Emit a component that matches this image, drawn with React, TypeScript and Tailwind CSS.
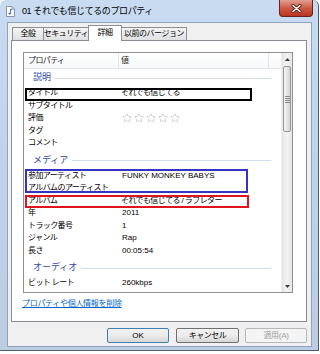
import React from "react";
import { Star } from "lucide-react";

type Item = { label: string; value?: React.ReactNode; latin?: boolean };
type Group = { name: string; items: Item[] };

const Stars = () => (
  <div className="flex items-center gap-[2px] pl-[1px]">
    {[0, 1, 2, 3, 4].map((i) => (
      <Star key={i} size={10} strokeWidth={1.4} className="text-[#b4b4b4]" />
    ))}
  </div>
);

const groups: Group[] = [
  {
    name: "説明",
    items: [
      { label: "タイトル", value: "それでも信じてる" },
      { label: "サブタイトル" },
      { label: "評価", value: <Stars /> },
      { label: "タグ" },
      { label: "コメント" },
    ],
  },
  {
    name: "メディア",
    items: [
      { label: "参加アーティスト", value: "FUNKY MONKEY BABYS", latin: true },
      { label: "アルバムのアーティスト" },
      { label: "アルバム", value: "それでも信じてる / ラブレター" },
      { label: "年", value: "2011", latin: true },
      { label: "トラック番号", value: "1", latin: true },
      { label: "ジャンル", value: "Rap", latin: true },
      { label: "長さ", value: "00:05:54", latin: true },
    ],
  },
  {
    name: "オーディオ",
    items: [{ label: "ビット レート", value: "260kbps", latin: true }],
  },
];

const tabs = [
  { name: "全般", w: "w-[32px]" },
  { name: "セキュリティ", w: "w-[46px]" },
  { name: "詳細", w: "w-[34px]", active: true },
  { name: "以前のバージョン", w: "w-[66px]" },
];

const FileIcon = () => (
  <svg width="9" height="11" viewBox="0 0 9 11">
    <path d="M0.5 0.5H6L8.5 3V10.5H0.5Z" fill="#fff" stroke="#8a97a8" />
    <path d="M6 0.5V3H8.5" fill="#dde4ee" stroke="#8a97a8" />
    <path d="M4.6 3.2V7.4" stroke="#2a5fc4" strokeWidth="0.9" />
    <path d="M4.6 3.2L6.2 4" stroke="#2a5fc4" strokeWidth="0.9" />
    <ellipse cx="3.6" cy="7.6" rx="1.2" ry="0.9" fill="#2a5fc4" />
  </svg>
);

const ScrollBar = () => (
  <div className="w-[11px] flex flex-col bg-gradient-to-r from-[#e6e6e6] via-[#f3f3f3] to-[#e6e6e6] border-l border-[#ececec]">
    <div className="h-[12px] flex items-center justify-center">
      <svg width="5" height="3" viewBox="0 0 5 3">
        <path d="M0 3L2.5 0L5 3Z" fill="#3c3c3c" />
      </svg>
    </div>
    <div className="mt-[1px] mx-[1px] h-[66px] rounded-[2px] border border-[#979797] bg-gradient-to-r from-[#f6f6f6] to-[#d4d4d4] flex flex-col items-center justify-center gap-[1px]">
      {[0, 1, 2, 3].map((i) => (
        <div key={i} className="w-[5px] h-[1px] bg-[#8c8c8c]" />
      ))}
    </div>
    <div className="flex-1" />
    <div className="h-[12px] flex items-center justify-center">
      <svg width="5" height="3" viewBox="0 0 5 3">
        <path d="M0 0L2.5 3L5 0Z" fill="#3c3c3c" />
      </svg>
    </div>
  </div>
);

const PropertyList = () => (
  <div className="ml-[11px] mt-[11px] w-[270px] h-[241px] border border-[#8e9094] flex bg-white">
    <div className="flex-1 relative overflow-hidden">
      <div className="h-[16px] flex border-b border-[#e2e5ea] text-[8px] tracking-[-0.6px] text-[#1e1e1e] bg-gradient-to-b from-white to-[#f7f8fa]">
        <div className="w-[95px] pl-[4px] flex items-center border-r border-[#e2e5ea]">プロパティ</div>
        <div className="w-[150px] pl-[2px] flex items-center border-r border-[#e2e5ea]">値</div>
      </div>
      {groups.map((g, gi) => (
        <div key={g.name}>
          <div className={`h-[18px] flex items-center pl-[9px] pr-[10px] ${gi > 0 ? "mt-[2px]" : ""}`}>
            <span className="text-[9px] text-[#2d4aa8]">{g.name}</span>
            <div className="flex-1 h-[1px] ml-[4px] bg-[#d3dcef]" />
          </div>
          {g.items.map((it) => (
            <div key={it.label} className="h-[12.5px] flex items-center text-[8px] text-black">
              <div className="w-[95px] pl-[4px] tracking-[-0.6px] whitespace-nowrap">{it.label}</div>
              <div className={`pl-[2px] whitespace-nowrap ${it.latin ? "pl-[3px]" : "tracking-[-0.6px]"}`}>
                {it.value}
              </div>
            </div>
          ))}
        </div>
      ))}
      <div className="absolute left-[1px] top-[35px] w-[227px] h-[13px] border-2 border-black" />
      <div className="absolute left-[1px] top-[116px] w-[223px] h-[24px] border-2 border-[#3434c4]" />
      <div className="absolute left-[1px] top-[142px] w-[224px] h-[13px] border-2 border-[#e0141c]" />
    </div>
    <ScrollBar />
  </div>
);

export default function App() {
  return (
    <div className="w-[319px] h-[351px] flex flex-col rounded-t-[6px] border-r border-b border-[#4d5d72] bg-gradient-to-b from-[#c8dbf1] via-[#bfd2ea] to-[#bccde2] font-[family-name:'Liberation_Sans','Noto_Sans_CJK_JP',sans-serif]">
      <div className="h-[22px] flex items-start">
        <div className="pl-[6px] pt-[6px]">
          <FileIcon />
        </div>
        <div className="ml-[7px] mt-[6px] text-[9px] leading-[11px] tracking-[-0.4px] text-black whitespace-nowrap">
          01 それでも信じてるのプロパティ
        </div>
        <div className="flex-1" />
        <div className="mr-[5px] w-[34px] h-[17px] rounded-b-[4px] border border-t-0 border-[#6b2218] bg-gradient-to-b from-[#e0a091] via-[#cc5a45] to-[#b9321f] flex items-center justify-center">
          <svg width="11" height="9" viewBox="0 0 11 9">
            <path d="M2 1.5L9 7.5M9 1.5L2 7.5" stroke="#4a1a12" strokeWidth="3" strokeLinecap="round" />
            <path d="M2 1.5L9 7.5M9 1.5L2 7.5" stroke="#ffffff" strokeWidth="1.6" strokeLinecap="round" />
          </svg>
        </div>
      </div>
      <div className="ml-[7px] w-[305px] h-[325px] border border-[#8ea3bc] bg-[#f0f0f0] flex flex-col">
        <div className="ml-[4px] pt-[2px] flex items-end">
          {tabs.map((t, i) => (
            <div
              key={t.name}
              className={`${t.w} ${i > 0 ? "-ml-px" : ""} border border-b-0 border-[#8c8e94] flex items-center justify-center text-[8px] tracking-[-0.5px] text-black whitespace-nowrap ${
                t.active
                  ? "h-[16px] -mb-px bg-white relative z-10 pb-[2px]"
                  : "h-[13px] bg-gradient-to-b from-[#f4f4f4] to-[#dfe0e2]"
              }`}
            >
              {t.name}
            </div>
          ))}
        </div>
        <div className="ml-[3px] w-[296px] h-[282px] border border-[#898c95] bg-white flex flex-col">
          <PropertyList />
          <div className="ml-[10px] mt-[6px] text-[8px] leading-[10px] tracking-[-0.3px] text-[#0066cc] underline">
            プロパティや個人情報を削除
          </div>
        </div>
        <div className="mt-[6px] pr-[4px] flex justify-end">
          <div className="w-[62px] h-[15px] rounded-[2px] border border-[#3c7fb1] bg-gradient-to-b from-[#f2f2f2] via-[#ebebeb] to-[#d6d6d6] flex items-center justify-center text-[8px] text-black">
            OK
          </div>
          <div className="ml-[7px] w-[63px] h-[15px] rounded-[2px] border border-[#707070] bg-gradient-to-b from-[#f2f2f2] via-[#ebebeb] to-[#d6d6d6] flex items-center justify-center text-[8px] tracking-[-0.5px] text-black">
            キャンセル
          </div>
          <div className="ml-[6px] w-[62px] h-[15px] rounded-[2px] border border-[#b5b8bb] bg-[#f4f4f4] flex items-center justify-center text-[8px] tracking-[-0.3px] text-[#a0a0a0]">
            適用(A)
          </div>
        </div>
      </div>
    </div>
  );
}
